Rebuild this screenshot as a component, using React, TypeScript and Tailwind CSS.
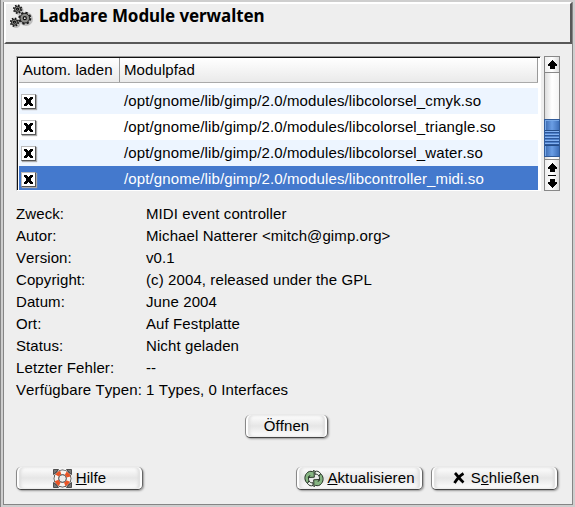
import type { ReactNode } from "react";

const modules = [
  { path: "/opt/gnome/lib/gimp/2.0/modules/libcolorsel_cmyk.so", row: "bg-[#edf5ff]" },
  { path: "/opt/gnome/lib/gimp/2.0/modules/libcolorsel_triangle.so", row: "bg-white" },
  { path: "/opt/gnome/lib/gimp/2.0/modules/libcolorsel_water.so", row: "bg-[#edf5ff]" },
  { path: "/opt/gnome/lib/gimp/2.0/modules/libcontroller_midi.so", row: "bg-[#4479cd] text-white" },
];

const details = [
  ["Zweck:", "MIDI event controller"],
  ["Autor:", "Michael Natterer <mitch@gimp.org>"],
  ["Version:", "v0.1"],
  ["Copyright:", "(c) 2004, released under the GPL"],
  ["Datum:", "June 2004"],
  ["Ort:", "Auf Festplatte"],
  ["Status:", "Nicht geladen"],
  ["Letzter Fehler:", "--"],
  ["Verfügbare Typen:", "1 Types, 0 Interfaces"],
];

function Gear({ x, y, r }: { x: number; y: number; r: number }) {
  const tooth = (r * 6.2832) / 16;
  return (
    <g transform={`translate(${x} ${y})`}>
      <circle r={r} fill="none" stroke="#161616" strokeWidth="2.2" strokeDasharray={`${tooth} ${tooth}`} />
      <circle r={r - 0.6} fill="#8b8b88" stroke="#222" strokeWidth="1" />
      <circle r={r * 0.28} fill="#e4e4e4" stroke="#111" strokeWidth="1.2" />
    </g>
  );
}

function GearsIcon() {
  return (
    <svg className="h-[24px] w-[24px]" viewBox="0 0 24 24">
      <g transform="translate(1 1)" opacity="0.2">
        <circle cx="8" cy="5.500" r="4.500" />
        <circle cx="15" cy="14" r="7" />
        <circle cx="5" cy="18.500" r="4.500" />
      </g>
      <Gear x={7.6} y={5.2} r={3.6} />
      <Gear x={14.8} y={14.2} r={5.4} />
      <Gear x={4.4} y={18.2} r={3.6} />
    </svg>
  );
}

function LifebuoyIcon() {
  return (
    <svg className="h-[19px] w-[19px] shrink-0" viewBox="0 0 19 19">
      <path d="M.500 .500h5l-5 5zM18.500 .500h-5l5 5zM.500 18.500h5l-5-5zM18.500 18.500h-5l5-5z" fill="#777" stroke="#333" strokeWidth=".800" />
      <circle cx="9.500" cy="9.500" r="6.200" fill="none" stroke="#3a3a3a" strokeWidth="5.400" />
      <circle cx="9.500" cy="9.500" r="6.200" fill="none" stroke="#f6f3f0" strokeWidth="4" />
      <circle cx="9.500" cy="9.500" r="6.200" fill="none" stroke="#ea5425" strokeWidth="4" strokeDasharray="4.600 5.140" strokeDashoffset="-2.570" />
      <circle cx="9.500" cy="9.500" r="3.700" fill="#ececec" stroke="#555" strokeWidth=".800" />
    </svg>
  );
}

function RefreshIcon() {
  return (
    <svg className="h-[19px] w-[20px] shrink-0" viewBox="0 0 20 19" stroke="#263326" strokeWidth="1" strokeLinejoin="round">
      <path d="M3.500 14.500C.500 12 0 7.500 2.500 4.500 4 2.500 6.500 1.700 8.500 2.700L10 1.200l.300 7-6 .300 1.500-2C4.500 7.500 4 9.500 5 12z" fill="#86b582" />
      <path d="M16.500 4.500c3 2.500 3.500 7 1 10-1.500 2-4 2.800-6 1.800L10 17.800l-.300-7 6-.300-1.500 2c1.300-1 1.800-3 .800-5.500z" fill="#86b582" />
      <path d="M11 2.500c2-.800 4-.200 5.500 2L15 7c-.800-1.400-2.200-2-4-1.800z" fill="#eef3ed" />
      <path d="M9 16.500c-2 .800-4 .200-5.500-2L5 12c.800 1.400 2.200 2 4 1.800z" fill="#eef3ed" />
    </svg>
  );
}

function Check() {
  return (
    <span className="ml-[2px] flex h-[15px] w-[15px] items-center justify-center border border-t-[#bbb] border-r-[#555] border-b-[#555] border-l-[#bbb] bg-white shadow-[1px_1px_1px_#aaa]">
      <svg className="h-[9px] w-[9px]" viewBox="0 0 9 9" shapeRendering="crispEdges">
        <path d="M0 0h3v1h1v1h1V1h1V0h3v2H8v1H7v3h1v1h1v2H6V8H5V7H4v1H3v1H0V7h1V6h1V3H1V2H0z" />
      </svg>
    </span>
  );
}

function Button({ children, size }: { children: ReactNode; size: string }) {
  return (
    <button
      className={`flex h-[23px] items-center justify-center whitespace-nowrap rounded-[5px] border-b border-l border-r border-b-[#444] border-l-[#888] border-r-[#666] bg-linear-to-b from-white via-[#e6e6e6] to-white shadow-[inset_2px_0_1px_#fff,inset_-2px_0_1px_#fff,inset_4px_0_3px_#ddd,inset_-4px_0_3px_#ddd,1px_1px_2px_#999] ${size}`}
    >
      {children}
    </button>
  );
}

function Arrow({ down = false }: { down?: boolean }) {
  return (
    <svg className={`h-[9px] w-[9px] shrink-0 ${down ? "rotate-180" : ""}`} viewBox="0 0 9 9" shapeRendering="crispEdges">
      <path d="M4 0h1v1h1v1h1v1h1v1h1v2H7v3H2V6H0V4h1V3h1V2h1V1h1z" />
    </svg>
  );
}

export default function App() {
  return (
    <div className="flex h-[507px] w-[575px] border-l border-[#858585] bg-[#cecece] px-[2px] py-[2px] font-['Liberation_Sans',sans-serif] text-[15px] leading-[22px] tracking-[0.1px] text-black [font-kerning:none]">
      <main className="flex h-[503px] w-[570px] flex-col border-r border-b border-l border-[#858585] bg-[#eee]">
        <header className="flex h-[42px] items-start border-2 border-t-white border-r-[#585858] border-b-[#585858] border-l-white pl-[4px]">
          <GearsIcon />
          <h1 className="ml-[5px] whitespace-nowrap font-['Noto_Sans',sans-serif] text-[17px] leading-[24px] font-bold tracking-[-0.08px]">Ladbare Module verwalten</h1>
        </header>

        <div className="mt-[12px] ml-[12px] flex h-[135px]">
          <section className="flex w-[525px] flex-col border-t border-r border-b border-l border-t-[#999] border-r-white border-b-white border-l-[#bbb]">
            <div className="flex h-[133px] flex-col overflow-hidden border-t border-l border-[#111] bg-white pr-[2px] pl-px">
              <div className="flex h-[25px] shrink-0 border-b border-[#aaa] bg-linear-to-b from-white to-[#eaeaea] leading-[24px]">
                <div className="w-[101px] border-r border-[#999] pl-[4px] whitespace-nowrap">Autom. laden</div>
                <div className="flex-1 border-r border-[#999] pl-[4px]">Modulpfad</div>
              </div>
              <div className="h-[5px] shrink-0" />
              {modules.map((m) => (
                <div key={m.path} className={`flex h-[26px] shrink-0 items-center whitespace-nowrap tracking-[0.12px] ${m.row}`}>
                  <div className="w-[105px]"><Check /></div>
                  <span>{m.path}</span>
                </div>
              ))}
            </div>
          </section>

          <div className="ml-[3px] flex h-[135px] w-[16px] flex-col border border-[#888] bg-linear-to-r from-[#ddd] via-white to-[#f4f4f4]">
            <div className="flex h-[16px] items-center justify-center border-b border-[#888] bg-linear-to-r from-[#eee] via-white to-[#ddd]"><Arrow /></div>
            <div className="h-[46px]" />
            <div className="-mx-px flex h-[38px] flex-col justify-center border border-[#315b99] bg-linear-to-r from-[#3b6ab0] via-[#6b9ee5] to-[#3f70b9] shadow-[inset_1px_1px_0_#79a9e8]">
              <div className="h-[16px] border-y border-[#264d87] bg-[repeating-linear-gradient(to_bottom,#82b0f0_0px,#82b0f0_1px,#2c579b_1px,#2c579b_2px,#4c7fc9_2px,#4c7fc9_3px)]" />
            </div>
            <div className="h-[2px]" />
            <div className="flex flex-1 flex-col items-center justify-center gap-[3px] border-t border-[#888] bg-linear-to-r from-[#eee] via-white to-[#ddd]">
              <Arrow />
              <div className="h-px w-[8px] shrink-0 bg-black" />
              <Arrow down />
            </div>
          </div>
        </div>

        <dl className="mt-[12px] ml-[12px] grid grid-cols-[130px_1fr] whitespace-nowrap">
          {details.map(([k, v]) => (
            <div key={k} className="col-span-2 grid h-[22px] grid-cols-subgrid">
              <dt>{k}</dt>
              <dd>{v}</dd>
            </div>
          ))}
        </dl>

        <div className="mt-[14px] ml-[241px]">
          <Button size="w-[83px]">Öffnen</Button>
        </div>

        <footer className="mt-[29px] flex pl-[12px]">
          <Button size="w-[127px]"><LifebuoyIcon /><span className="ml-[4px]"><u>H</u>ilfe</span></Button>
          <div className="w-[153px]" />
          <Button size="w-[127px]"><RefreshIcon /><span className="ml-[3px]"><u>A</u>ktualisieren</span></Button>
          <div className="w-[8px]" />
          <Button size="w-[127px]">
            <svg className="ml-[3px] h-[12px] w-[12px]" viewBox="0 0 12 12"><path d="M2 1C4.500 3.500 7.500 8 10.500 10.500M10.500 1.500C7 3.500 4 7 1.500 11" stroke="#000" strokeWidth="2.800" fill="none" /></svg>
            <span className="ml-[6px] tracking-[0.2px]">S<u>c</u>hließen</span>
          </Button>
        </footer>
      </main>
    </div>
  );
}
